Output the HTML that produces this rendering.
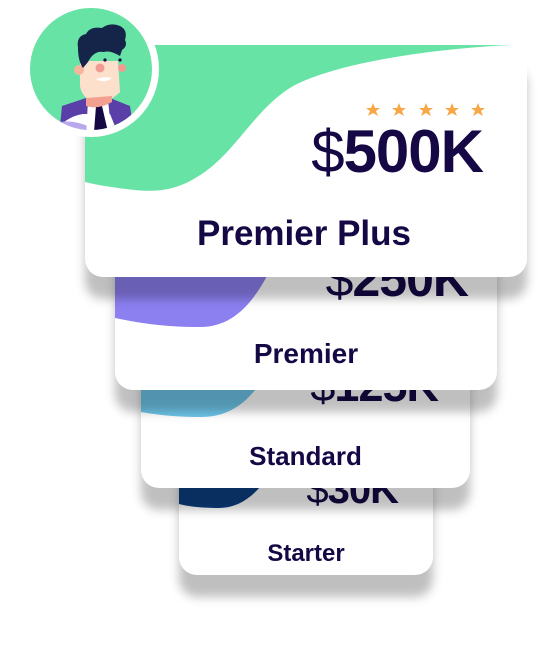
<!DOCTYPE html>
<html><head><meta charset="utf-8"><style>
body{margin:0;width:551px;height:646px;background:#fff;position:relative;overflow:hidden;font-family:"Liberation Sans",Arial,sans-serif;color:#150845}
.card{position:absolute;background:#fff;border-radius:18px;overflow:hidden;box-shadow:0 22px 10px rgba(0,0,0,0.25)}
.card svg.bg{position:absolute;left:0;top:0}
.price{position:absolute;font-weight:bold;white-space:nowrap;text-align:right}
.price span{font-weight:normal}
.label{position:absolute;left:0;right:0;text-align:center;font-weight:bold;white-space:nowrap}
</style></head><body>

<!-- Card 4 -->
<div class="card" style="left:179px;top:420px;width:254px;height:155px;">
<svg class="bg" width="254" height="155"><path d="M0 0 H120 C100 40 80 88 40 88 C20 88 8 86 0 84 Z" fill="#0d3e80"/></svg>
<div class="price" style="right:35px;top:50px;font-size:40px;line-height:40px;letter-spacing:-1px"><span>$</span>30K</div>
<div class="label" style="top:122px;font-size:24px;line-height:24px">Starter</div>
</div>

<!-- Card 3 -->
<div class="card" style="left:141px;top:320px;width:329px;height:168px;">
<svg class="bg" width="329" height="168"><path d="M0 0 H150 C130 50 110 97 60 97 C30 97 12 94 0 92 Z" fill="#6ec6ea"/></svg>
<div class="price" style="right:32px;top:43px;font-size:45px;line-height:45px;letter-spacing:-1px"><span>$</span>125K</div>
<div class="label" style="top:123px;font-size:26px;line-height:26px">Standard</div>
</div>

<!-- Card 2 -->
<div class="card" style="left:115px;top:200px;width:382px;height:190px;">
<svg class="bg" width="382" height="190"><path d="M0 0 H185 C160 60 140 127 85 127 C45 127 20 122 0 118 Z" fill="#8c7ff0"/></svg>
<div class="price" style="right:29px;top:54px;font-size:50px;line-height:50px;letter-spacing:-1px"><span>$</span>250K</div>
<div class="label" style="top:140px;font-size:28px;line-height:28px">Premier</div>
</div>

<!-- Card 1 -->
<div class="card" style="left:85px;top:45px;width:442px;height:232px;">
<svg class="bg" width="442" height="232"><path d="M0 0 H426 C360 3 260 15 210 40 C170 62 150 110 112 132 C90 146 70 147 50 145 C30 143 12 140 0 137 Z" fill="#68e3a6"/>
<g fill="#f7a745">
<polygon points="288,58 290,63 295,63 291,66 293,71 288,68 283,71 285,66 281,63 286,63"/>
<polygon points="314,58 316,63 321,63 317,66 319,71 314,68 309,71 311,66 307,63 312,63"/>
<polygon points="341,58 343,63 348,63 344,66 346,71 341,68 336,71 338,66 334,63 339,63"/>
<polygon points="367,58 369,63 374,63 370,66 372,71 367,68 362,71 364,66 360,63 365,63"/>
<polygon points="393,58 395,63 400,63 396,66 398,71 393,68 388,71 390,66 386,63 391,63"/>
</g></svg>
<div class="price" style="right:44px;top:78px;font-size:60px;line-height:58px;letter-spacing:-1px"><span>$</span>500K</div>
<div class="label" style="top:171px;font-size:35px;line-height:35px;left:-4px">Premier Plus</div>
</div>

<!-- Avatar -->
<svg style="position:absolute;left:22px;top:0" width="140" height="140" viewBox="0 0 140 140">
<defs><clipPath id="c"><circle cx="69" cy="69" r="61"/></clipPath></defs>
<circle cx="69" cy="69" r="68" fill="#fff"/>
<circle cx="69" cy="69" r="61" fill="#68e3a6"/>
<g clip-path="url(#c)"><g transform="translate(6,6)">
<path d="M30 140 L34 100 L58 92 L82 92 L102 100 L108 140 Z" fill="#5a3fa8"/>
<path d="M20 140 Q30 112 55 108 L82 108 L95 140 Z" fill="#fff"/>
<path d="M14 122 Q36 110 60 120 L60 140 L14 140 Z" fill="#b9a8ee"/>
<path d="M60 94 L80 94 L84 132 L58 132 Z" fill="#fff"/>
<path d="M68 100 L74 100 L80 126 L73 130 L66 126 Z" fill="#150845"/>
<path d="M52 55 L90 55 L92 86 Q80 98 66 96 Q54 92 52 80 Z" fill="#fde0cc"/>
<circle cx="51" cy="64" r="5" fill="#f4b79c"/>
<path d="M58 100 Q70 104 84 96 L84 90 L58 92 Z" fill="#f4a090"/>
<circle cx="72" cy="62" r="4.5" fill="#f29a92"/>
<circle cx="94" cy="62" r="4" fill="#f29a92"/>
<path d="M68 73 Q76 78 84 72 Q78 70 68 73 Z" fill="#fff"/>
<circle cx="77" cy="54" r="1.6" fill="#150845"/>
<circle cx="92" cy="54" r="1.6" fill="#150845"/>
<path d="M50 42 Q48 30 58 28 Q62 20 74 22 Q82 16 92 20 Q100 24 97 34 Q100 40 94 44 L92 50 Q82 44 76 46 Q66 44 60 56 L55 62 Q50 55 50 42 Z" fill="#152449"/>
</g></g>
</svg>
</body></html>
